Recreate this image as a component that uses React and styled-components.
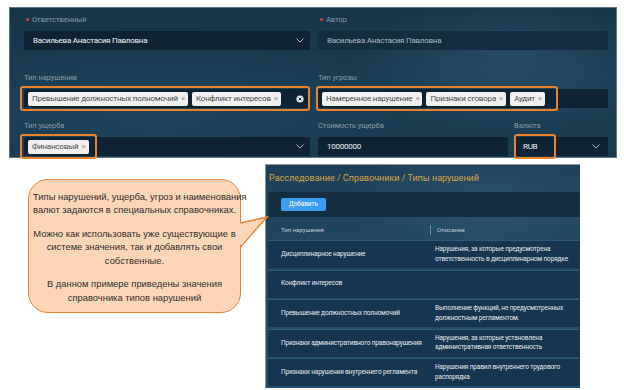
import React from "react";
import styled, { createGlobalStyle } from "styled-components";

const Global = createGlobalStyle`
  html, body {
    margin: 0;
    padding: 0;
    background: #ffffff;
  }
  body {
    width: 624px;
    height: 390px;
    overflow: hidden;
    font-family: Roboto, "Noto Sans", sans-serif;
  }
  * { box-sizing: border-box; }
`;

const Page = styled.div`
  width: 624px;
  height: 390px;
  display: flex;
  flex-direction: column;
`;

/* ---------- form panel ---------- */

const FormPanel = styled.div`
  margin: 7px 0 0 9px;
  width: 608px;
  height: 151px;
  border: 1px solid #5d7483;
  padding: 6px 8px 0 14px;
  background:
    radial-gradient(ellipse 160px 70px at 500px 55px, rgba(70, 120, 150, 0.3), transparent),
    radial-gradient(ellipse 260px 90px at 150px 110px, rgba(40, 90, 120, 0.25), transparent),
    linear-gradient(180deg, #173549 0%, #1b3d52 60%, #1a3b50 100%);
`;

const FormRow = styled.div`
  display: grid;
  grid-template-columns: 286px 290px;
  column-gap: 8px;
  margin-bottom: ${({ $gap }) => $gap || 0}px;
`;

const SplitCol = styled.div`
  display: grid;
  grid-template-columns: 190px 94px;
  column-gap: 6px;
`;

const Label = styled.div`
  height: 11px;
  line-height: 11px;
  font-size: 7.6px;
  letter-spacing: -0.1px;
  color: #8499a7;
  margin-bottom: 6px;
  white-space: nowrap;
  display: flex;
  align-items: center;
  padding-left: ${({ $required }) => ($required ? 2 : 0)}px;

  &::before {
    content: ${({ $required }) => ($required ? '""' : "none")};
    width: 3px;
    height: 3px;
    border-radius: 50%;
    background: #d8434a;
    margin-right: 3px;
  }
`;

const FieldWrap = styled.div`
  position: relative;
`;

const Field = styled.div`
  height: 19px;
  border-radius: 2px;
  background: ${({ $disabled }) => ($disabled ? "#132e41" : "#0e2435")};
  display: flex;
  align-items: center;
  padding: 0 ${({ $pr }) => $pr ?? 9}px 0 ${({ $tags }) => ($tags ? 4 : 9)}px;
  gap: 4px;
  font-size: 8px;
  letter-spacing: -0.25px;
  color: ${({ $disabled }) => ($disabled ? "#a9b8c3" : "#eef3f6")};
  white-space: nowrap;
`;

const Value = styled.span`
  flex: 1;
`;

const Tag = styled.span`
  height: 14px;
  line-height: 14px;
  padding: 0 3px 0 4px;
  border-radius: 2px;
  background: #f1f1f1;
  color: #4a4a4a;
  font-size: 8px;
  letter-spacing: -0.2px;
  white-space: nowrap;

  &::after {
    content: "×";
    margin-left: 3px;
    color: #9a9a9a;
  }
`;

const Highlight = styled.div`
  position: absolute;
  top: -3px;
  height: 25px;
  left: ${({ $l }) => $l}px;
  width: ${({ $w }) => $w}px;
  border: 2px solid #e9822a;
  border-radius: 3px;
  pointer-events: none;
`;

const Chevron = () => (
  <svg width="8" height="5" viewBox="0 0 8 5" style={{ marginLeft: "auto" }}>
    <path d="M0.5 0.5 L4 4 L7.5 0.5" fill="none" stroke="#9fb0bb" strokeWidth="1" />
  </svg>
);

const ClearIcon = () => (
  <svg width="8" height="8" viewBox="0 0 8 8" style={{ marginLeft: "auto" }}>
    <circle cx="4" cy="4" r="3.6" fill="#e3e6e8" />
    <path d="M2.6 2.6 L5.4 5.4 M5.4 2.6 L2.6 5.4" stroke="#1a2f3e" strokeWidth="1" />
  </svg>
);

/* ---------- lower part ---------- */

const Lower = styled.div`
  display: flex;
  align-items: flex-start;
  margin-top: 6px;
  padding-left: 28px;
`;

const Bubble = styled.div`
  position: relative;
  margin-top: 15px;
  width: 213px;
  height: 134px;
  border: 1.5px solid #e58335;
  border-radius: 20px;
  background: #fcd6b6;
  padding: 10px 4px 0;
  text-align: center;
  font-family: "Liberation Sans", Arial, sans-serif;
  font-size: 9.4px;
  line-height: 13.3px;
  color: #2f2f2f;
  white-space: nowrap;
`;

const Para = styled.p`
  margin: 0 0 10.5px;
`;

const Tail = styled.svg`
  position: absolute;
  left: 208px;
  top: 34px;
  overflow: visible;
`;

const TablePanel = styled.div`
  margin-left: 24px;
  width: 315px;
  height: 224px;
  border-left: 1px solid #8897a0;
  border-top: 1px solid #8897a0;
  padding-left: 2px;
  overflow: hidden;
  background:
    radial-gradient(ellipse 140px 60px at 220px 40px, rgba(80, 130, 160, 0.25), transparent),
    linear-gradient(180deg, #1d4058 0%, #20475f 40%, #24506b 100%);
`;

const Crumbs = styled.div`
  height: 27px;
  line-height: 26px;
  padding-left: 1px;
  font-size: 9px;
  color: #d6a445;
  white-space: nowrap;
`;

const Toolbar = styled.div`
  height: 25px;
  background: #132d41;
  border-radius: 2px 0 0 2px;
  display: flex;
  align-items: center;
  padding-left: 13px;
`;

const AddButton = styled.div`
  width: 45px;
  height: 13px;
  border-radius: 2px;
  background: #3c9cf0;
  color: #ffffff;
  font-size: 6.3px;
  line-height: 13px;
  text-align: center;
`;

const HeadRow = styled.div`
  display: grid;
  grid-template-columns: 162px 1fr;
  height: 23px;
  align-items: end;
  padding-bottom: 5px;
  font-size: 6.2px;
  letter-spacing: -0.1px;
  color: #b8c6d0;
`;

const HeadCell = styled.div`
  padding-left: ${({ $first }) => ($first ? 13 : 6)}px;
  border-left: ${({ $first }) => ($first ? "none" : "1px solid #6d8ba0")};
  line-height: 10px;
`;

const Rows = styled.div`
  display: flex;
  flex-direction: column;
  gap: 1.6px;
`;

const Row = styled.div`
  display: grid;
  grid-template-columns: 167px 1fr;
  align-items: center;
  height: 28px;
  background: #163550;
  border-top: 1px solid #2c5a78;
  font-size: 6.5px;
  letter-spacing: -0.15px;
  line-height: 9.5px;
  color: #e3eaef;
  white-space: nowrap;
`;

const Cell = styled.div`
  padding-left: ${({ $first }) => ($first ? 13 : 0)}px;
`;

const rows = [
  ["Дисциплинарное нарушение", ["Нарушения, за которые предусмотрена", "ответственность в дисциплинарном порядке"]],
  ["Конфликт интересов", []],
  ["Превышение должностных полномочий", ["Выполнение функций, не предусмотренных", "должностным регламентом."]],
  ["Признаки административного правонарушения", ["Нарушения, за которые установлена", "административная ответственность"]],
  ["Признаки нарушения внутреннего регламента", ["Нарушения правил внутреннего трудового", "распорядка"]],
];

export default function App() {
  return (
    <Page>
      <Global />
      <FormPanel>
        <FormRow $gap={22}>
          <div>
            <Label $required>Ответственный</Label>
            <Field $pr={6}>
              <Value>Васильева Анастасия Павловна</Value>
              <Chevron />
            </Field>
          </div>
          <div>
            <Label $required>Автор</Label>
            <Field $disabled>Васильева Анастасия Павловна</Field>
          </div>
        </FormRow>

        <FormRow $gap={12}>
          <div>
            <Label>Тип нарушения</Label>
            <FieldWrap>
              <Field $tags $pr={6}>
                <Tag>Превышение должностных полномочий</Tag>
                <Tag>Конфликт интересов</Tag>
                <ClearIcon />
              </Field>
              <Highlight $l={-4} $w={290} />
            </FieldWrap>
          </div>
          <div>
            <Label>Тип угрозы</Label>
            <FieldWrap>
              <Field $tags>
                <Tag>Намеренное нарушение</Tag>
                <Tag>Признаки сговора</Tag>
                <Tag>Аудит</Tag>
              </Field>
              <Highlight $l={-2} $w={242} />
            </FieldWrap>
          </div>
        </FormRow>

        <FormRow>
          <div>
            <Label>Тип ущерба</Label>
            <FieldWrap>
              <Field $tags $pr={6}>
                <Tag>Финансовый</Tag>
                <Chevron />
              </Field>
              <Highlight $l={-4} $w={77} />
            </FieldWrap>
          </div>
          <SplitCol>
            <div>
              <Label>Стоимость ущерба</Label>
              <Field>10000000</Field>
            </div>
            <div>
              <Label>Валюта</Label>
              <FieldWrap>
                <Field $pr={8}>
                  <Value>RUB</Value>
                  <Chevron />
                </Field>
                <Highlight $l={0} $w={42} />
              </FieldWrap>
            </div>
          </SplitCol>
        </FormRow>
      </FormPanel>

      <Lower>
        <Bubble>
          <Para>
            Типы нарушений, ущерба, угроз и наименования
            <br />
            валют задаются в специальных справочниках.
          </Para>
          <Para>
            Можно как использовать уже существующие в
            <br />
            системе значения, так и добавлять свои
            <br />
            собственные.
          </Para>
          <Para>
            В данном примере приведены значения
            <br />
            справочника типов нарушений
          </Para>
          <Tail width="32" height="36" viewBox="0 0 32 36">
            <polygon points="1,9 30,3 1,33" fill="#fcd6b6" />
            <polyline points="3.5,9 30,3 3.5,33" fill="none" stroke="#e58335" strokeWidth="1.5" />
          </Tail>
        </Bubble>

        <TablePanel>
          <Crumbs>Расследование / Справочники / Типы нарушений</Crumbs>
          <Toolbar>
            <AddButton>Добавить</AddButton>
          </Toolbar>
          <HeadRow>
            <HeadCell $first>Тип нарушения</HeadCell>
            <HeadCell>Описание</HeadCell>
          </HeadRow>
          <Rows>
            {rows.map(([name, desc]) => (
              <Row key={name}>
                <Cell $first>{name}</Cell>
                <Cell>
                  {desc.map((line) => (
                    <div key={line}>{line}</div>
                  ))}
                </Cell>
              </Row>
            ))}
          </Rows>
        </TablePanel>
      </Lower>
    </Page>
  );
}
